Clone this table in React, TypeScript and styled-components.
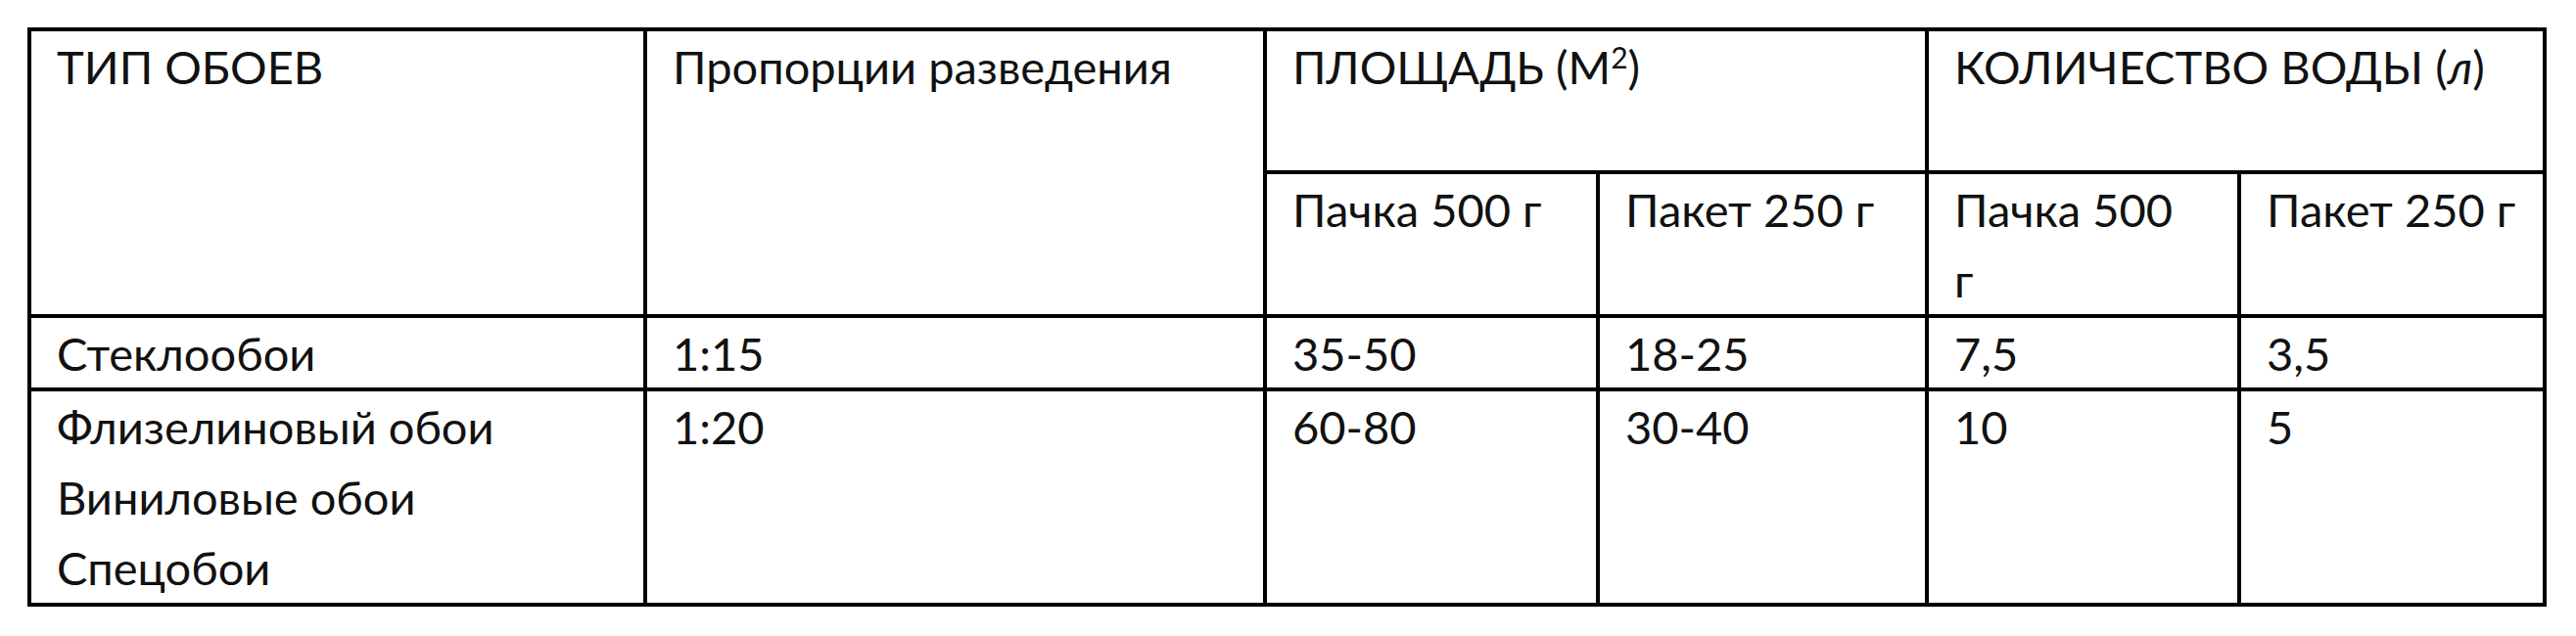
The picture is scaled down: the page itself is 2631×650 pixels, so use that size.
import React from "react";
import styled, { createGlobalStyle } from "styled-components";

const GlobalStyle = createGlobalStyle`
  html, body {
    margin: 0;
    padding: 0;
    background: #ffffff;
  }
  body {
    font-family: Lato, "Open Sans", sans-serif;
    color: #111;
  }
`;

const Page = styled.div`
  padding: 28px 0 0 28px;
`;

const Grid = styled.div`
  display: grid;
  grid-template-columns: 629px 633px 340px 336px 319px 312px;
  grid-template-rows: 146px 147px 75px 220px;
  width: max-content;
  border-top: 4px solid #000;
  border-left: 4px solid #000;
`;

interface CellProps {
  $col: string;
  $row: string;
}

const Cell = styled.div<CellProps>`
  grid-column: ${(p) => p.$col};
  grid-row: ${(p) => p.$row};
  box-sizing: border-box;
  border-right: 4px solid #000;
  border-bottom: 4px solid #000;
  padding: 0 8px 0 26px;
  font-size: 47px;
  line-height: 72px;
  white-space: nowrap;
`;

const Line = styled.div`
  display: block;
`;

const Sup = styled.span`
  font-size: 30px;
  vertical-align: 16px;
  line-height: 0;
`;

const Unit = styled.span`
  font-style: italic;
`;

const rows: string[][][] = [
  [["Стеклообои"], ["1:15"], ["35-50"], ["18-25"], ["7,5"], ["3,5"]],
  [
    ["Флизелиновый обои", "Виниловые обои", "Спецобои"],
    ["1:20"],
    ["60-80"],
    ["30-40"],
    ["10"],
    ["5"],
  ],
];

const App = () => {
  return (
    <Page>
      <GlobalStyle />
      <Grid>
        <Cell $col="1" $row="1 / span 2">ТИП ОБОЕВ</Cell>
        <Cell $col="2" $row="1 / span 2">Пропорции разведения</Cell>
        <Cell $col="3 / span 2" $row="1">
          ПЛОЩАДЬ (М<Sup>2</Sup>)
        </Cell>
        <Cell $col="5 / span 2" $row="1">
          КОЛИЧЕСТВО ВОДЫ (<Unit>л</Unit>)
        </Cell>
        <Cell $col="3" $row="2">Пачка 500 г</Cell>
        <Cell $col="4" $row="2">Пакет 250 г</Cell>
        <Cell $col="5" $row="2">
          <Line>Пачка 500</Line>
          <Line>г</Line>
        </Cell>
        <Cell $col="6" $row="2">Пакет 250 г</Cell>
        {rows.map((row, r) =>
          row.map((lines, c) => (
            <Cell key={`${r}-${c}`} $col={`${c + 1}`} $row={`${r + 3}`}>
              {lines.map((t) => (
                <Line key={t}>{t}</Line>
              ))}
            </Cell>
          ))
        )}
      </Grid>
    </Page>
  );
};

export default App;
